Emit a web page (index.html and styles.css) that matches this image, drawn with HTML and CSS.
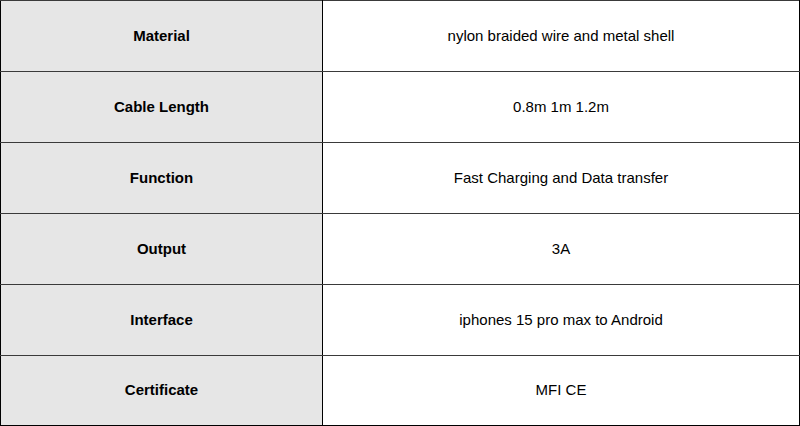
FILE: index.html
```html
<!DOCTYPE html>
<html>
<head>
<meta charset="utf-8">
<link rel="stylesheet" href="styles.css">
</head>
<body>
<table class="spec">
  <tr><th>Material</th><td>nylon braided wire and metal shell</td></tr>
  <tr><th>Cable Length</th><td>0.8m 1m 1.2m</td></tr>
  <tr><th>Function</th><td>Fast Charging and Data transfer</td></tr>
  <tr><th>Output</th><td>3A</td></tr>
  <tr><th>Interface</th><td>iphones 15 pro max to Android</td></tr>
  <tr class="last"><th>Certificate</th><td>MFI CE</td></tr>
</table>
</body>
</html>
```
FILE: styles.css
```css
html, body {
  margin: 0;
  padding: 0;
  background: #ffffff;
}
.spec {
  width: 800px;
  border-collapse: collapse;
  table-layout: fixed;
  font-family: "Liberation Sans", Arial, sans-serif;
  font-size: 15px;
  color: #000;
}
.spec th, .spec td {
  height: 68px;
  padding: 0 0 2px 0;
  text-align: center;
  vertical-align: middle;
  border-top: 1px solid #3a3a3a;
  border-bottom: 1px solid #3a3a3a;
  border-left: 1px solid #000;
  border-right: 1px solid #000;
}
.spec .last th, .spec .last td {
  height: 67px;
  border-bottom-color: #000;
}
.spec th {
  width: 321px;
  background: #e6e6e6;
  font-weight: bold;
}
.spec td {
  background: #fff;
  font-weight: normal;
}
```
